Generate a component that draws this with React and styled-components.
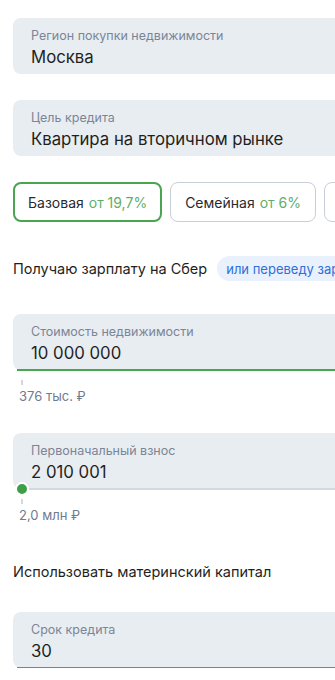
import styled, { createGlobalStyle } from 'styled-components';

const GlobalStyle = createGlobalStyle`
  html, body {
    margin: 0;
    padding: 0;
    background: #ffffff;
    overflow: hidden;
  }
  body {
    font-family: Inter, "Noto Sans", "Liberation Sans", sans-serif;
    color: #1f1f22;
  }
`;

const Page = styled.div`
  width: 460px;
  padding: 18px 0 0 13px;
  display: flex;
  flex-direction: column;
`;

const Field = styled.div`
  position: relative;
  height: 56px;
  box-sizing: border-box;
  padding: 9px 18px 0;
  border-radius: 8px;
  background: #e8edf2;
  margin-bottom: ${(p) => p.$gap || 0}px;
`;

const Label = styled.div`
  font-size: 12.5px;
  line-height: 18px;
  color: #7b8596;
`;

const Value = styled.div`
  font-size: 16.75px;
  line-height: 24px;
  color: #1f1f22;
`;

const Track = styled.div`
  position: absolute;
  left: 4px;
  right: 0;
  bottom: -1px;
  height: 2px;
  background: ${(p) => (p.$filled ? '#48a550' : '#d3d9df')};
`;

const Knob = styled.div`
  position: absolute;
  left: -2px;
  top: -6px;
  width: 10px;
  height: 10px;
  border-radius: 50%;
  background: #3f9f47;
  border: 2px solid #ffffff;
`;

const Chips = styled.div`
  display: flex;
  gap: 8px;
  margin-bottom: 34px;
`;

const Chip = styled.div`
  flex: none;
  height: 40px;
  box-sizing: border-box;
  display: flex;
  align-items: center;
  padding: 0 ${(p) => (p.$active ? 13 : 14)}px;
  border-radius: 8px;
  border: ${(p) => (p.$active ? '2px solid #4aa552' : '1px solid #c9cfd6')};
  font-size: 14px;
  color: #2a2a2e;
  white-space: nowrap;
`;

const Rate = styled.span`
  color: #5fae68;
  margin-left: 5px;
`;

const SberRow = styled.div`
  display: flex;
  align-items: center;
  gap: 10px;
  height: 25px;
  margin-bottom: 33px;
  font-size: 14.5px;
  white-space: nowrap;
`;

const Pill = styled.div`
  height: 25px;
  display: flex;
  align-items: center;
  padding: 0 9px;
  border-radius: 13px;
  background: #e9f1fd;
  color: #2f6fd8;
  font-size: 13px;
`;

const Hint = styled.div`
  padding: 10px 0 0 6px;
  margin-bottom: ${(p) => p.$gap}px;
`;

const Tick = styled.div`
  width: 2px;
  height: 5px;
  margin-left: 2px;
  background: #d3d8de;
`;

const HintText = styled.div`
  margin-top: 3px;
  font-size: 13px;
  line-height: 16px;
  color: #6f7b90;
`;

const Plain = styled.div`
  font-size: 14.5px;
  line-height: 20px;
  margin-bottom: 30px;
`;

const App = () => (
  <Page>
    <GlobalStyle />
    <Field $gap={26}>
      <Label>Регион покупки недвижимости</Label>
      <Value>Москва</Value>
    </Field>
    <Field $gap={26}>
      <Label>Цель кредита</Label>
      <Value>Квартира на вторичном рынке</Value>
    </Field>
    <Chips>
      <Chip $active>
        Базовая<Rate>от 19,7%</Rate>
      </Chip>
      <Chip>
        Семейная<Rate>от 6%</Rate>
      </Chip>
      <Chip>
        IT-ипотека<Rate>от 6%</Rate>
      </Chip>
    </Chips>
    <SberRow>
      Получаю зарплату на Сбер
      <Pill>или переведу зарплату</Pill>
    </SberRow>
    <Field>
      <Label>Стоимость недвижимости</Label>
      <Value>10 000 000</Value>
      <Track $filled />
    </Field>
    <Hint $gap={29}>
      <Tick />
      <HintText>376 тыс. ₽</HintText>
    </Hint>
    <Field>
      <Label>Первоначальный взнос</Label>
      <Value>2 010 001</Value>
      <Track>
        <Knob />
      </Track>
    </Field>
    <Hint $gap={39}>
      <Tick />
      <HintText>2,0 млн ₽</HintText>
    </Hint>
    <Plain>Использовать материнский капитал</Plain>
    <Field>
      <Label>Срок кредита</Label>
      <Value>30</Value>
      <Track $filled />
    </Field>
  </Page>
);

export default App;
